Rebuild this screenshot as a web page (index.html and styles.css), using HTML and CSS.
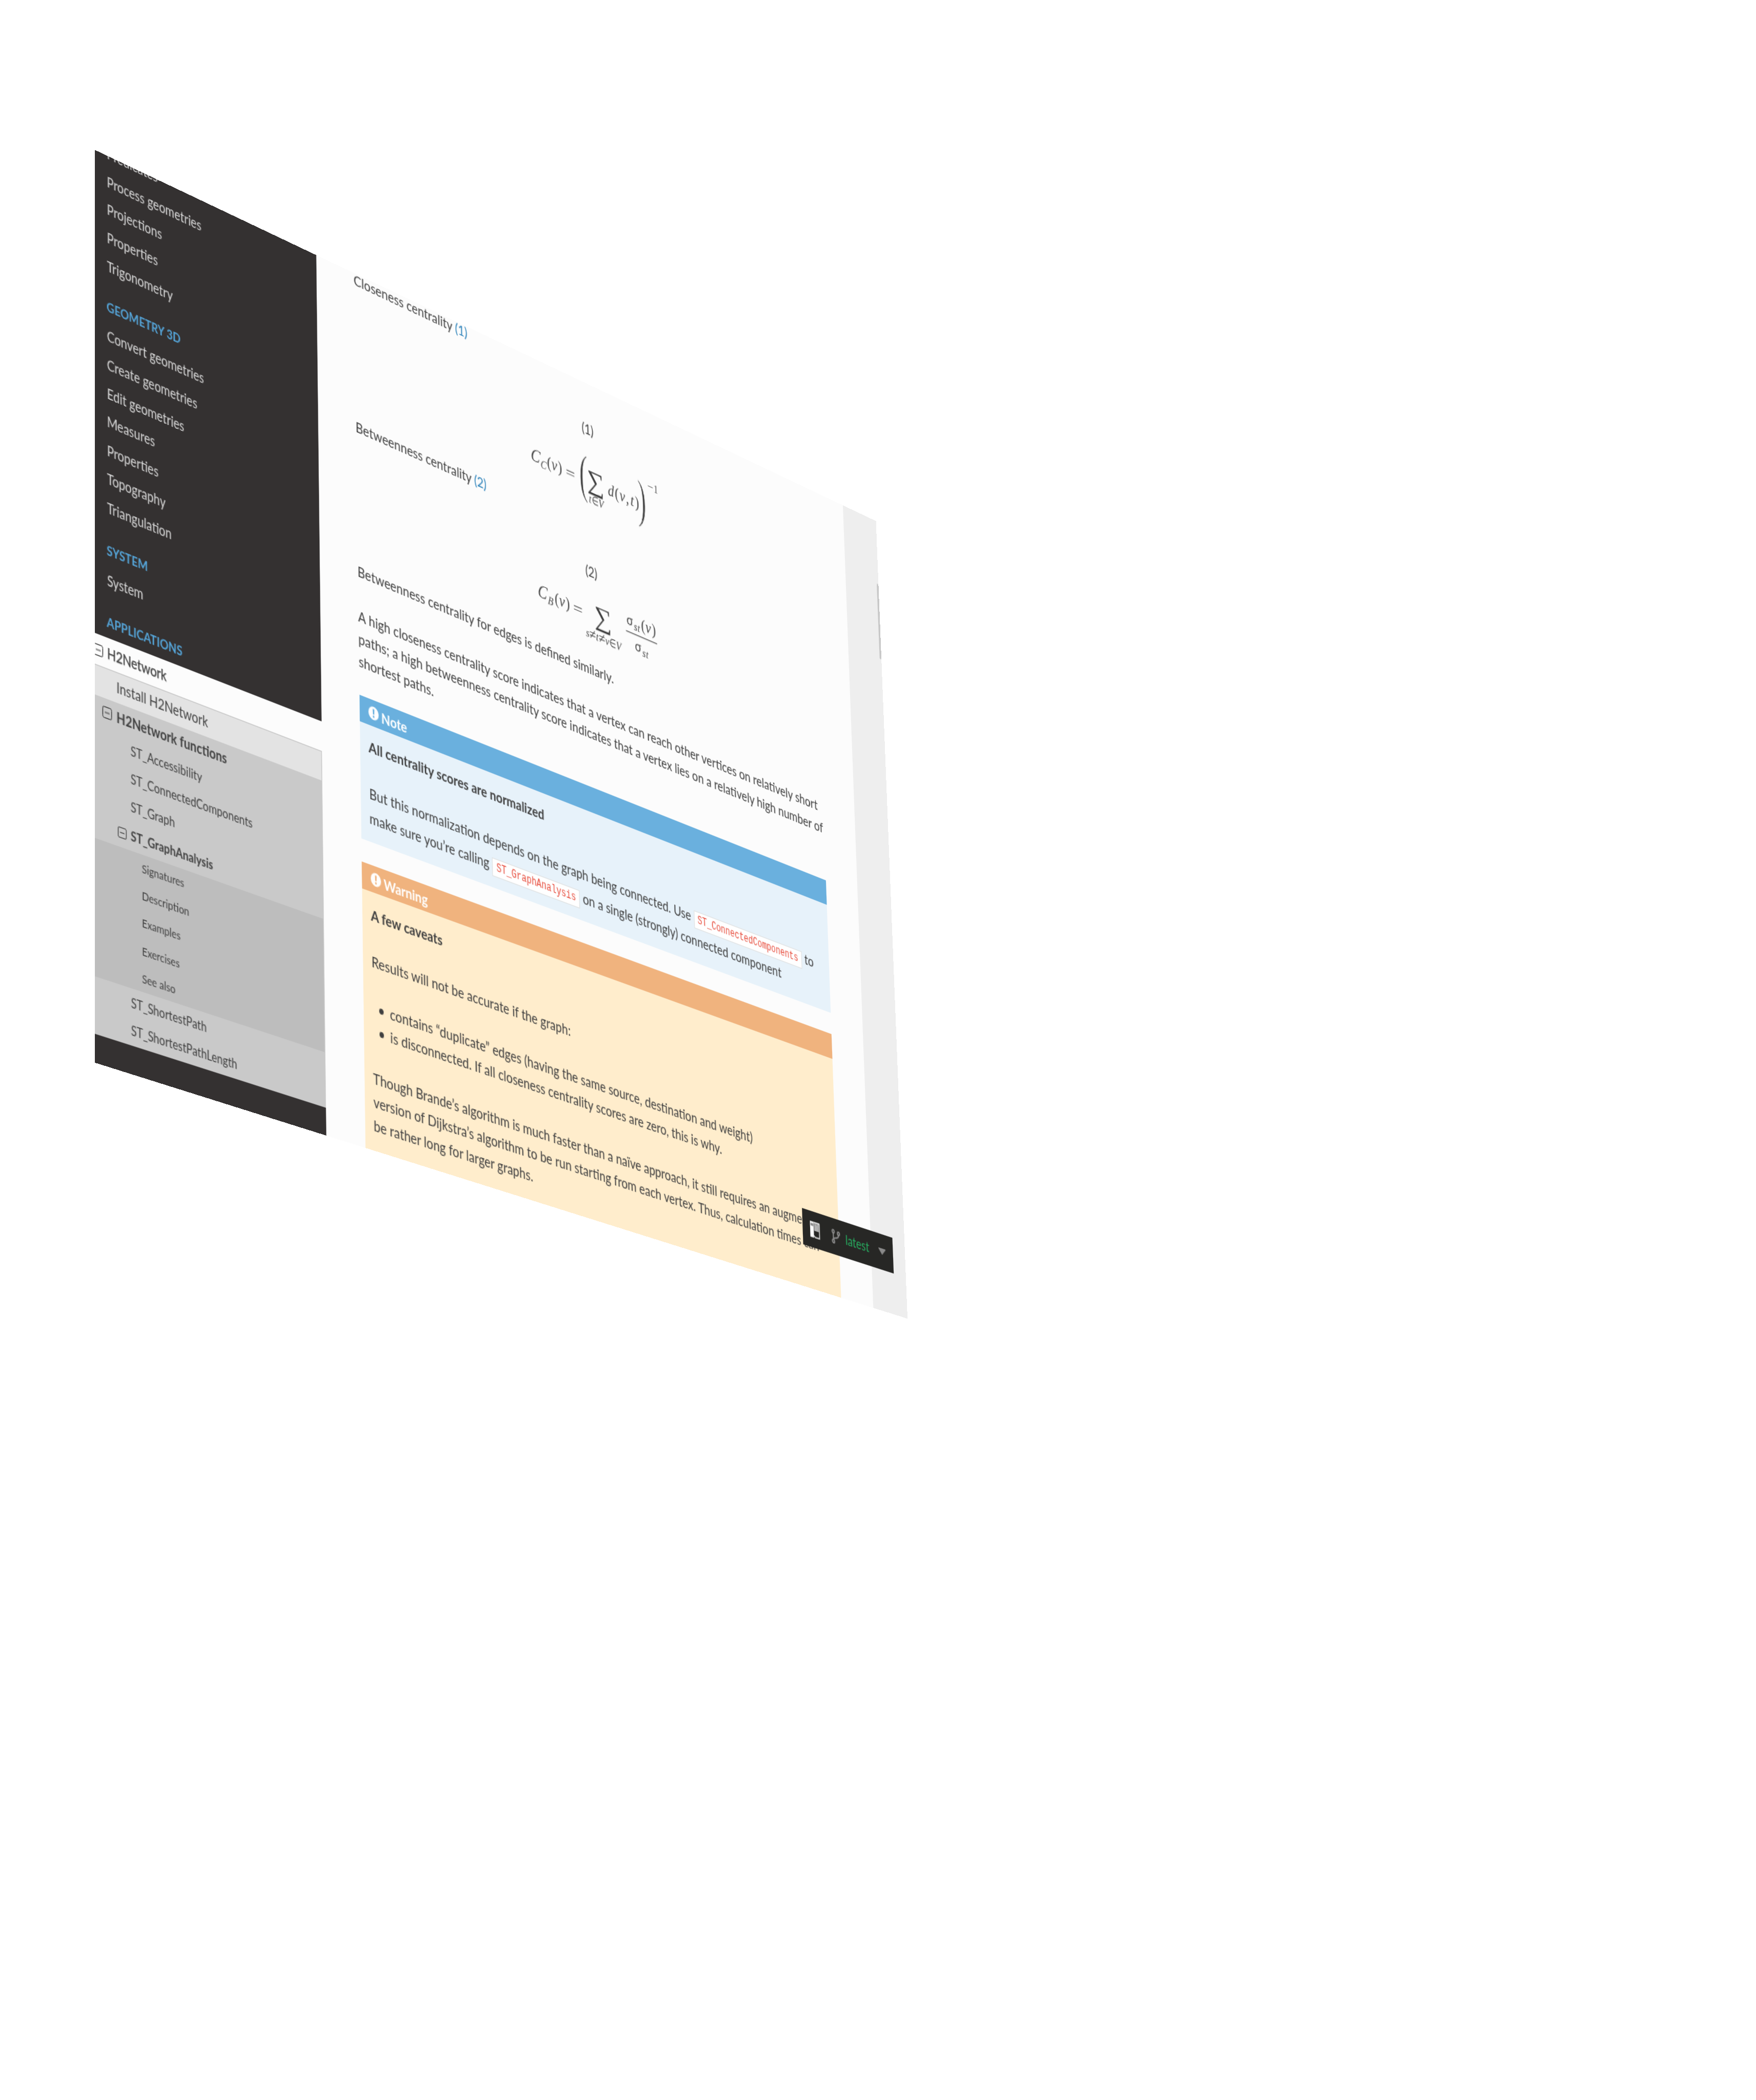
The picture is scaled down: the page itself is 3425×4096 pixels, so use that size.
FILE: index.html
```
<!DOCTYPE html>
<html lang="en">
<head>
<meta charset="utf-8">
<title>ST_GraphAnalysis</title>
<link rel="stylesheet" href="styles.css">
</head>
<body>
<div class="screen">
  <nav class="side">
    <ul class="menu">
      <li>Predicates</li>
      <li>Process geometries</li>
      <li>Projections</li>
      <li>Properties</li>
      <li>Trigonometry</li>
    </ul>
    <p class="caption">GEOMETRY 3D</p>
    <ul class="menu">
      <li>Convert geometries</li>
      <li>Create geometries</li>
      <li>Edit geometries</li>
      <li>Measures</li>
      <li>Properties</li>
      <li>Topography</li>
      <li>Triangulation</li>
    </ul>
    <p class="caption">SYSTEM</p>
    <ul class="menu">
      <li>System</li>
    </ul>
    <p class="caption">APPLICATIONS</p>
    <ul class="current">
      <li class="l1"><svg class="toggle" viewBox="0 0 12 12"><rect x=".5" y=".5" width="11" height="11" rx="1.8"/><path d="M3 6h6"/></svg>H2Network</li>
      <li class="l2">Install H2Network</li>
      <li class="l2 open"><svg class="toggle" viewBox="0 0 12 12"><rect x=".5" y=".5" width="11" height="11" rx="1.8"/><path d="M3 6h6"/></svg>H2Network functions</li>
      <li class="l3">ST_Accessibility</li>
      <li class="l3">ST_ConnectedComponents</li>
      <li class="l3">ST_Graph</li>
      <li class="l3 open"><svg class="toggle" viewBox="0 0 12 12"><rect x=".5" y=".5" width="11" height="11" rx="1.8"/><path d="M3 6h6"/></svg>ST_GraphAnalysis</li>
      <li class="l4">Signatures</li>
      <li class="l4">Description</li>
      <li class="l4">Examples</li>
      <li class="l4">Exercises</li>
      <li class="l4">See also</li>
      <li class="l3 last">ST_ShortestPath</li>
      <li class="l3 last">ST_ShortestPathLength</li>
    </ul>
  </nav>
  <main class="content">
    <p>Closeness centrality <a>(1)</a></p>
    <svg class="math first" viewBox="345.3 19.5 696.5 137.5">
      <text class="num" x="683.5" y="58.7" text-anchor="middle">(1)</text>
      <g class="it">
        <text class="big" transform="translate(596.2 117.600) skewX(-6)">C</text>
        <text class="sub" transform="translate(610.8 121.3) skewX(-6)">C</text>
        <text class="up" x="620.8" y="117.600">(</text>
        <text x="627.6" y="117.600">v</text>
        <text class="up" x="637" y="117.600">)</text>
        <text class="thin" transform="translate(648.6 118.600) scale(1.4 1)">=</text>
        <text class="tall" transform="translate(668.8 126) scale(.66 1)">(</text>
        <text class="sum" transform="translate(680.8 119.5) scale(1.22 1)">∑</text>
        <text class="sub" x="683" y="136">t</text>
        <text class="sub up" x="687.500" y="136" textLength="10" lengthAdjust="spacingAndGlyphs">∈</text>
        <text class="sub" x="697.5" y="136">V</text>
        <text x="712.5" y="117.600">d</text>
        <text class="up" x="723" y="117.600">(</text>
        <text x="730.4" y="117.600">v</text>
        <text x="740" y="117.600">,</text>
        <text x="747" y="117.600">t</text>
        <text class="up" x="754" y="117.600">)</text>
        <text class="tall" transform="translate(758 126) scale(.66 1)">)</text>
        <text class="sub up" x="774" y="90.3" textLength="9" lengthAdjust="spacingAndGlyphs">−</text>
        <text class="sub up" x="783.8" y="90.3">1</text>
      </g>
    </svg>
    <p>Betweenness centrality <a>(2)</a></p>
    <svg class="math second" viewBox="345.3 181 696.5 132.1">
      <text class="num" x="683.8" y="221" text-anchor="middle">(2)</text>
      <g class="it">
        <text class="big" transform="translate(602.2 268.6) skewX(-6)">C</text>
        <text class="sub" transform="translate(617 272.3) skewX(-6)">B</text>
        <text class="up" x="627.6" y="268.6">(</text>
        <text x="634.4" y="268.6">v</text>
        <text class="up" x="643.8" y="268.6">)</text>
        <text class="thin" transform="translate(655 269.6) scale(1.4 1)">=</text>
        <text class="sum" transform="translate(686.8 271.9) scale(1.22 1)">∑</text>
        <text class="sub" x="673.5" y="290.2">s</text>
        <text class="rel" x="678.6" y="291" textLength="9.800" lengthAdjust="spacingAndGlyphs">≠</text>
        <text class="sub" x="688.6" y="290.2">t</text>
        <text class="rel" x="692.6" y="291" textLength="9.800" lengthAdjust="spacingAndGlyphs">≠</text>
        <text class="sub" x="702.6" y="290.2">v</text>
        <text class="sub up" x="708.8" y="290.2" textLength="9.800" lengthAdjust="spacingAndGlyphs">∈</text>
        <text class="sub" x="718.8" y="290.2">V</text>
        <rect x="734.7" y="264.2" width="47.6" height="1"/>
        <text class="num" x="736" y="256.5">σ</text>
        <text class="sub" x="747" y="260">s</text>
        <text class="sub" x="752.6" y="260">t</text>
        <text class="up" x="758.2" y="256.5">(</text>
        <text x="765" y="256.5">v</text>
        <text class="up" x="774.6" y="256.5">)</text>
        <text class="num" x="747.8" y="282.5">σ</text>
        <text class="sub" x="759" y="286">s</text>
        <text class="sub" x="764.6" y="286">t</text>
      </g>
    </svg>
    <p class="lead">Betweenness centrality for edges is defined similarly.</p>
    <p class="body">A high closeness centrality score indicates that a vertex can reach other vertices on relatively short<br>paths; a high betweenness centrality score indicates that a vertex lies on a relatively high number of<br>shortest paths.</p>
    <section class="box note">
      <h2><svg class="bang" viewBox="0 0 14 14"><path fill-rule="evenodd" d="M7 0a7 7 0 1 0 0 14A7 7 0 0 0 7 0zM5.8 2.6h2.4L7.9 8.2H6.1zM5.9 9.4h2.2v2H5.9z"/></svg>Note</h2>
      <p class="gap"><b>All centrality scores are normalized</b></p>
      <p class="loose">But this normalization depends on the graph being connected. Use <code>ST_ConnectedComponents</code> to<br>make sure you’re calling <code>ST_GraphAnalysis</code> on a single (strongly) connected component</p>
    </section>
    <section class="box warning">
      <h2><svg class="bang" viewBox="0 0 14 14"><path fill-rule="evenodd" d="M7 0a7 7 0 1 0 0 14A7 7 0 0 0 7 0zM5.8 2.6h2.4L7.9 8.2H6.1zM5.9 9.4h2.2v2H5.9z"/></svg>Warning</h2>
      <p class="gap"><b>A few caveats</b></p>
      <p class="gap">Results will not be accurate if the graph:</p>
      <ul class="points gap">
        <li>contains “duplicate” edges (having the same source, destination and weight)</li>
        <li>is disconnected. If all closeness centrality scores are zero, this is why.</li>
      </ul>
      <p>Though Brande’s algorithm is much faster than a naïve approach, it still requires an augmented<br>version of Dijkstra’s algorithm to be run starting from each vertex. Thus, calculation times can<br>be rather long for larger graphs.</p>
    </section>
  </main>
  <div class="thumb"></div>
  <div class="versions">
    <svg class="book" viewBox="0 0 16 18"><path fill="#fff" d="M0 0h6v18H0z"/><path fill="#888" d="M6 .5h9V10H6z"/><path fill="none" stroke="#fff" stroke-width="1.2" d="M6 .6h9.2v16.8H8L6 15.5"/><path stroke="#252525" stroke-width=".8" d="M1.5 2v3M3 2v3M4.500 2v3"/><path stroke="#ddd" stroke-width="1" d="M8.500 2v8M10.500 3v7M12.500 2v8"/></svg>
    <svg class="branch" viewBox="0 0 14 16"><g fill="none" stroke="#8a8a8a" stroke-width="1.8"><circle cx="2.800" cy="2.600" r="1.700"/><circle cx="2.800" cy="13.400" r="1.700"/><circle cx="11.200" cy="3.600" r="1.700"/><path d="M2.800 4.300v7.400M11.200 5.300c0 4-3 3.400-5.600 4.200-1.700.5-2.800 1-2.800 2.200"/></g></svg>
    <span class="tag">latest</span>
    <svg class="caret" viewBox="0 0 11 6.500"><path fill="#8a8a8a" stroke="#8a8a8a" stroke-linejoin="round" d="M.6.5h9.800L5.500 5.900z"/></svg>
  </div>
</div>
</body>
</html>
```
FILE: styles.css
```
html,body{margin:0;background:#fff;overflow:hidden;width:3425px;height:4096px}
.screen{
  position:relative;
  display:flex;
  align-items:flex-start;
  width:1148px;
  height:925px;
  overflow:hidden;
  background:#eee;
  color:#404040;
  font:16px/24px Lato,sans-serif;
  white-space:nowrap;
  transform-origin:0 0;
  transform:matrix3d(1.563075,.770952,0,.000138303,-.00902,1.823752,0,-.0000486576,0,0,1,0,185.3775,292.5915,0,1);
}
p,ul,h2{margin:0;padding:0}
ul{list-style:none}

.side{
  flex:none;
  box-sizing:border-box;
  width:300.2px;
  height:941.650px;
  margin:-16.650px 0 0 -8.4px;
  background:#343131;
  color:#d9d9d9;
  font-size:14.4px;
  line-height:18px;
}
.side li{padding:.4045em 1.618em}
.caption{
  margin-top:12px;
  padding:0 23px;
  color:#55a5d9;
  font-size:13.500px;
  font-weight:bold;
  line-height:32px;
}
.current li{color:#404040;border-right:1px solid #c9c9c9}
.current .l1{
  background:#fcfcfc;
  border:solid #c9c9c9;
  border-width:1px 0;
  border-top-color:#fcfcfc;
  -webkit-text-stroke:.25px #404040;
}
.current .l2{padding-left:2.427em;background:#e3e3e3}
.current .l2.open{background:#c9c9c9}
.current .l3{padding-left:4.045em;background:#c9c9c9;font-size:12.96px;line-height:17.900px}
.current .l4{padding-left:5.663em;background:#bdbdbd;font-size:11.664px;line-height:17.900px}
.current .last{line-height:17.200px}
.current .open{font-weight:bold}
.toggle{
  width:12px;
  height:12px;
  margin:0 5.200px 0 -17.200px;
  vertical-align:-.8px;
  fill:none;
  stroke:#444;
  stroke-width:1;
}
.l3 .toggle{width:11px;height:11px;margin:0 5px 0 -16px}

.content{
  flex:none;
  box-sizing:border-box;
  width:799.8px;
  height:930.3px;
  margin-top:-5.300px;
  padding:0 51.8px;
  background:#fcfcfc;
}
a{color:#2980b9}
.gap{margin-bottom:24px}
.lead{margin-bottom:23.500px}
.body{margin-bottom:24.500px}
.math{display:block;width:696.4px;overflow:visible;fill:#404040}
.first{height:137.500px}
.second{height:132.100px}
.num{font:16px Lato,sans-serif}
.it{font:italic 18.500px "Liberation Serif",serif}
.up,.tall,.sum,.rel{font-style:normal}
.big{font-size:20.500px}
.tall{font-size:61px;stroke:#fcfcfc;stroke-width:1.2}
.sum{font-size:30px}
.thin{font-style:normal;font-size:18px}
.sub{font-size:13px}
.rel{font-size:17px}

.box{padding:12px;margin-bottom:24px}
.box h2{
  display:flex;
  align-items:center;
  gap:4px;
  height:28px;
  margin:-12px -12px 12px;
  padding-left:12px;
  color:#fff;
  font-size:16px;
  line-height:27px;
}
.bang{width:14px;height:14px;fill:#fff}
.note{background:#e7f2fa;padding-bottom:13px}
.note h2{background:#6ab0de;margin-bottom:11px}
.warning{background:#ffedcc;height:400px}
.warning h2{background:#f0b37e}
.loose{line-height:25.500px}
code{
  padding:2px 5px;
  border:1px solid #e1e4e5;
  background:#fff;
  color:#e74c3c;
  font:12px/12px "Liberation Mono",monospace;
}
.points li{display:flex;align-items:center;padding-left:9px}
.points li::before{
  content:"";
  width:6px;
  height:6px;
  margin:2px 9px 0 0;
  border-radius:50%;
  background:#404040;
}

.thumb{
  position:absolute;
  top:76px;
  right:.5px;
  width:3px;
  height:90px;
  border-radius:2px;
  background:#c8c8c8;
}
.versions{
  position:absolute;
  right:20px;
  bottom:46px;
  display:flex;
  align-items:center;
  box-sizing:border-box;
  width:146px;
  height:40.300px;
  padding:0 12px;
  background:#272725;
  color:#27ae60;
}
.book{width:15.500px;height:18px;margin-right:18px}
.branch{width:14.500px;height:16px;margin-right:8.500px}
.tag{padding-bottom:1.500px}
.caret{width:12px;height:7px;margin-left:auto}
```
